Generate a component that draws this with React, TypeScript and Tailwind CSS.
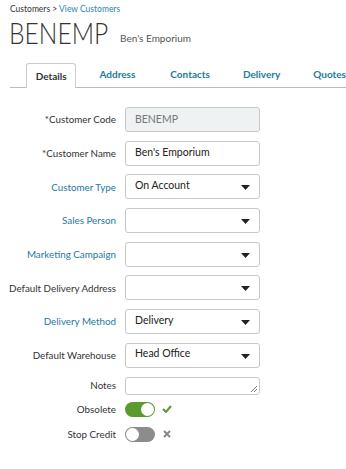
import React from "react";

const Caret = () => (
  <svg width="9" height="5" viewBox="0 0 9 5" className="absolute right-[9px] top-[10px]">
    <path d="M0 0 L9 0 L4.5 5 Z" fill="#222" />
  </svg>
);

function Row({ label, blue, children, h = "h-[25px]", mb = "mb-[8.7px]" }: { label: string; blue?: boolean; children: React.ReactNode; h?: string; mb?: string }) {
  return (
    <div className={`flex items-center ${mb}`}>
      <div className={`w-[116px] shrink-0 text-right text-[9.8px] whitespace-nowrap ${blue ? "text-[#2579a0]" : "text-[#333]"}`}>{label}</div>
      <div className={`ml-[9px] w-[135px] ${h} relative`}>{children}</div>
    </div>
  );
}

function Select({ value }: { value?: string }) {
  return (
    <div className="w-full h-full border border-[#c8c8c8] rounded-[3px] bg-white text-[10.5px] text-[#222] pl-[9px] pb-[2px] flex items-center relative">
      {value}
      <Caret />
    </div>
  );
}

export default function App() {
  return (
    <div className="w-[346px] h-[469px] bg-white overflow-hidden" style={{ fontFamily: "Lato, 'Open Sans', sans-serif" }}>
      <div className="pl-[10px] pt-[4px] text-[8.5px] text-[#333] leading-[11px]">
        Customers &gt; <span className="text-[#2a86b5]">View Customers</span>
      </div>
      <div className="pl-[9px] flex items-end mt-[1px]">
        <span className="inline-block w-[103px] origin-left scale-x-[0.82] text-[30px] font-light text-[#333] leading-[32px] whitespace-nowrap">BENEMP</span>
        <span className="ml-[8px] mb-[2px] text-[10px] text-[#555]">Ben's Emporium</span>
      </div>
      <div className="mt-[15px] ml-[10px] flex items-end border-b border-[#bbb] h-[25px] whitespace-nowrap">
        <div className="ml-[16px] w-[61px] h-[25px] border border-[#ccc] border-b-0 rounded-t-[3px] bg-white -mb-px flex items-center justify-center text-[10px] font-bold text-[#333]">Details</div>
        <div className="ml-[23px] h-[25px] flex items-center text-[10px] font-bold text-[#2579a0]">Address</div>
        <div className="ml-[35px] h-[25px] flex items-center text-[10px] font-bold text-[#2579a0]">Contacts</div>
        <div className="ml-[33px] h-[25px] flex items-center text-[10px] font-bold text-[#2579a0]">Delivery</div>
        <div className="ml-[33px] h-[25px] flex items-center text-[10px] font-bold text-[#2579a0]">Quotes</div>
      </div>
      <div className="mt-[19px]">
        <Row label="*Customer Code">
          <div className="w-full h-full border border-[#c8c8c8] rounded-[3px] bg-[#eef2f3] text-[10.5px] text-[#777] pl-[9px] flex items-center">BENEMP</div>
        </Row>
        <Row label="*Customer Name">
          <div className="w-full h-full border border-[#c8c8c8] rounded-[3px] bg-white text-[10.5px] text-[#222] pl-[9px] flex items-center">Ben's Emporium</div>
        </Row>
        <Row label="Customer Type" blue><Select value="On Account" /></Row>
        <Row label="Sales Person" blue><Select /></Row>
        <Row label="Marketing Campaign" blue><Select /></Row>
        <Row label="Default Delivery Address"><Select /></Row>
        <Row label="Delivery Method" blue><Select value="Delivery" /></Row>
        <Row label="Default Warehouse"><Select value="Head Office" /></Row>
        <Row label="Notes" h="h-[18px]" mb="mb-[7px]">
          <div className="w-full h-full border border-[#c8c8c8] rounded-[3px] bg-white relative">
            <svg width="7" height="7" viewBox="0 0 7 7" className="absolute right-[2px] bottom-[2px]">
              <path d="M1 7 L7 1 M4 7 L7 4" stroke="#555" strokeWidth="0.8" />
            </svg>
          </div>
        </Row>
        <div className="flex items-center mb-[10px]">
          <div className="w-[116px] shrink-0 text-right text-[9.8px] text-[#333]">Obsolete</div>
          <div className="ml-[9px] w-[30px] h-[15px] rounded-full bg-[#5a9a2e] relative">
            <div className="absolute right-[1px] top-[1px] w-[13px] h-[13px] rounded-full bg-white" />
          </div>
          <svg width="10" height="8" viewBox="0 0 10 8" className="ml-[7px]">
            <path d="M1 4 L4 7 L9 1" stroke="#5a9a2e" strokeWidth="2" fill="none" />
          </svg>
        </div>
        <div className="flex items-center">
          <div className="w-[116px] shrink-0 text-right text-[9.8px] text-[#333]">Stop Credit</div>
          <div className="ml-[9px] w-[30px] h-[15px] rounded-full bg-[#8c8c8c] relative">
            <div className="absolute left-[1px] top-[1px] w-[13px] h-[13px] rounded-full bg-white" />
          </div>
          <svg width="8" height="8" viewBox="0 0 8 8" className="ml-[8px]">
            <path d="M1 1 L7 7 M7 1 L1 7" stroke="#888" strokeWidth="2" />
          </svg>
        </div>
      </div>
    </div>
  );
}
